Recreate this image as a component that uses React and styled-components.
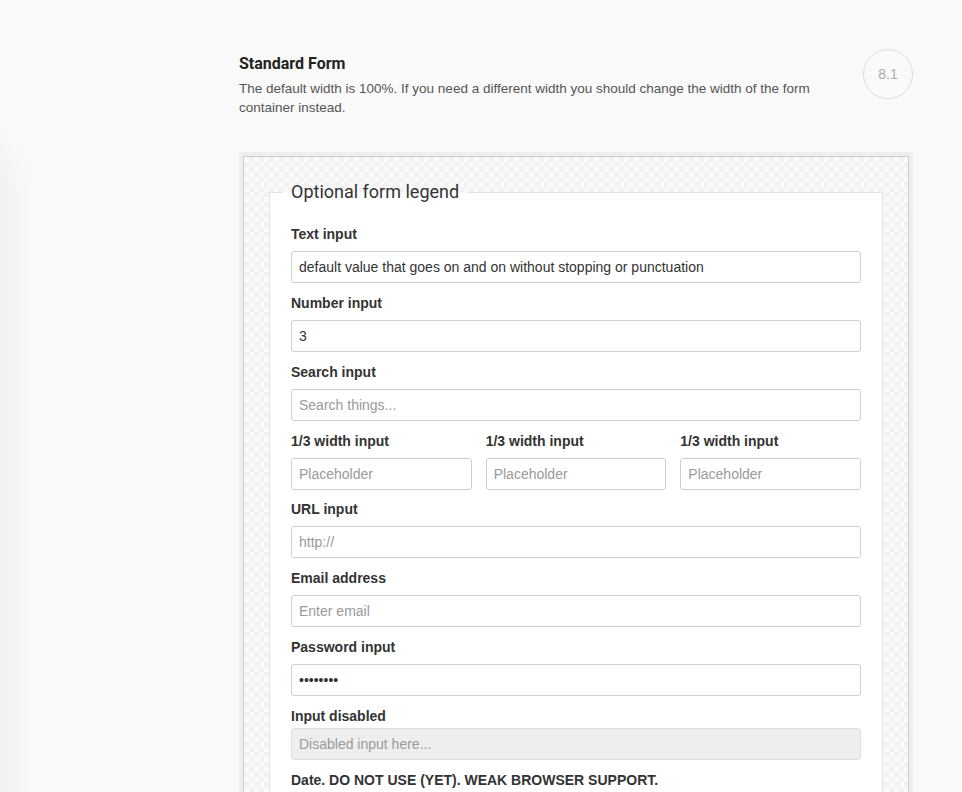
import React from "react";
import styled, {createGlobalStyle} from "styled-components";

const GlobalStyle = createGlobalStyle`
    html, body {
        margin: 0;
        padding: 0;
        background: #fafafa;
    }

    body {
        font-family: "Liberation Sans", Arial, sans-serif;
        color: #333333;
        overflow: hidden;
    }

    * {
        box-sizing: border-box;
    }
`;

const SideShadow = styled.div`
    position: fixed;
    left: -200px;
    top: 150px;
    width: 200px;
    height: 2000px;
    box-shadow: 0 0 45px rgba(0, 0, 0, 0.08);
`;

const Page = styled.div`
    padding: 49px 49px 80px 239px;
    min-height: 100vh;
`;

const Header = styled.div`
    display: flex;
    align-items: flex-start;
    gap: 24px;
`;

const HeaderText = styled.div`
    flex: 1;
    padding-top: 5px;
    max-width: 600px;
`;

const Title = styled.h2`
    margin: 0 0 5px;
    font-family: Roboto, "Liberation Sans", sans-serif;
    font-size: 16px;
    font-weight: 700;
    line-height: 20px;
    color: #222222;
`;

const Description = styled.p`
    margin: 0;
    font-size: 13.5px;
    line-height: 19px;
    color: #555555;
`;

const SectionBadge = styled.div`
    flex: none;
    margin-left: auto;
    width: 50px;
    height: 50px;
    border-radius: 50%;
    border: 1px solid #dddddd;
    display: flex;
    align-items: center;
    justify-content: center;
    font-size: 14px;
    color: #aaaaaa;
`;

const ExampleFrame = styled.div`
    margin-top: 35px;
    padding: 4px;
    background: #eeeeee;
`;

const ExampleCanvas = styled.div`
    border: 1px solid #cccccc;
    padding: 23px 25px 40px;
    background-color: #fafafa;
    background-image: linear-gradient(45deg, #f2f2f2 25%, transparent 25%, transparent 75%, #f2f2f2 75%),
    linear-gradient(45deg, #f2f2f2 25%, transparent 25%, transparent 75%, #f2f2f2 75%);
    background-size: 10px 10px;
    background-position: 0 0, 5px 5px;
`;

const Fieldset = styled.fieldset`
    margin: 0;
    padding: 20px 21px 20px;
    border: 1px solid #e3e3e3;
    background: #ffffff;
`;

const Legend = styled.legend`
    margin-left: -8px;
    padding: 0 8px;
    font-family: Roboto, "Liberation Sans", sans-serif;
    font-size: 18px;
    line-height: 24px;
    color: #333333;
`;

const Group = styled.div`
    margin-bottom: 10px;
`;

const Label = styled.label`
    display: block;
    margin-bottom: ${props => props.$tight ? "2px" : "7px"};
    font-size: 14px;
    font-weight: 700;
    line-height: 20px;
    color: #333333;
`;

const Input = styled.input`
    display: block;
    width: 100%;
    height: 32px;
    padding: 0 7px;
    border: 1px solid #d0d0d0;
    border-radius: 3px;
    background: #ffffff;
    font-family: "Liberation Sans", Arial, sans-serif;
    font-size: 14px;
    color: #333333;
    outline: none;

    &::placeholder {
        color: #9a9a9a;
    }

    &:disabled {
        background: #eeeeee;
        border-color: #dddddd;
    }
`;

const ThirdsRow = styled.div`
    display: grid;
    grid-template-columns: repeat(3, 1fr);
    gap: 14px;
    margin-bottom: -1px;
`;

export default function App() {
    return (
        <React.Fragment>
            <GlobalStyle/>
            <SideShadow/>
            <Page>
                <Header>
                    <HeaderText>
                        <Title>Standard Form</Title>
                        <Description>
                            The default width is 100%. If you need a different width you should change the width of the form container instead.
                        </Description>
                    </HeaderText>
                    <SectionBadge>8.1</SectionBadge>
                </Header>

                <ExampleFrame>
                    <ExampleCanvas>
                        <Fieldset>
                            <Legend>Optional form legend</Legend>

                            <Group>
                                <Label>Text input</Label>
                                <Input type="text" defaultValue="default value that goes on and on without stopping or punctuation"/>
                            </Group>

                            <Group>
                                <Label>Number input</Label>
                                <Input type="number" defaultValue="3"/>
                            </Group>

                            <Group>
                                <Label>Search input</Label>
                                <Input type="search" placeholder="Search things..."/>
                            </Group>

                            <ThirdsRow>
                                {[1, 2, 3].map(i => (
                                    <Group key={i}>
                                        <Label>1/3 width input</Label>
                                        <Input type="text" placeholder="Placeholder"/>
                                    </Group>
                                ))}
                            </ThirdsRow>

                            <Group>
                                <Label>URL input</Label>
                                <Input type="url" placeholder="http://"/>
                            </Group>

                            <Group>
                                <Label>Email address</Label>
                                <Input type="email" placeholder="Enter email"/>
                            </Group>

                            <Group>
                                <Label>Password input</Label>
                                <Input type="password" defaultValue="password"/>
                            </Group>

                            <Group>
                                <Label $tight>Input disabled</Label>
                                <Input type="text" placeholder="Disabled input here..." disabled/>
                            </Group>

                            <Group>
                                <Label>Date. DO NOT USE (YET). WEAK BROWSER SUPPORT.</Label>
                                <Input type="text" placeholder="mm/dd/yyyy"/>
                            </Group>
                        </Fieldset>
                    </ExampleCanvas>
                </ExampleFrame>
            </Page>
        </React.Fragment>
    )
}
